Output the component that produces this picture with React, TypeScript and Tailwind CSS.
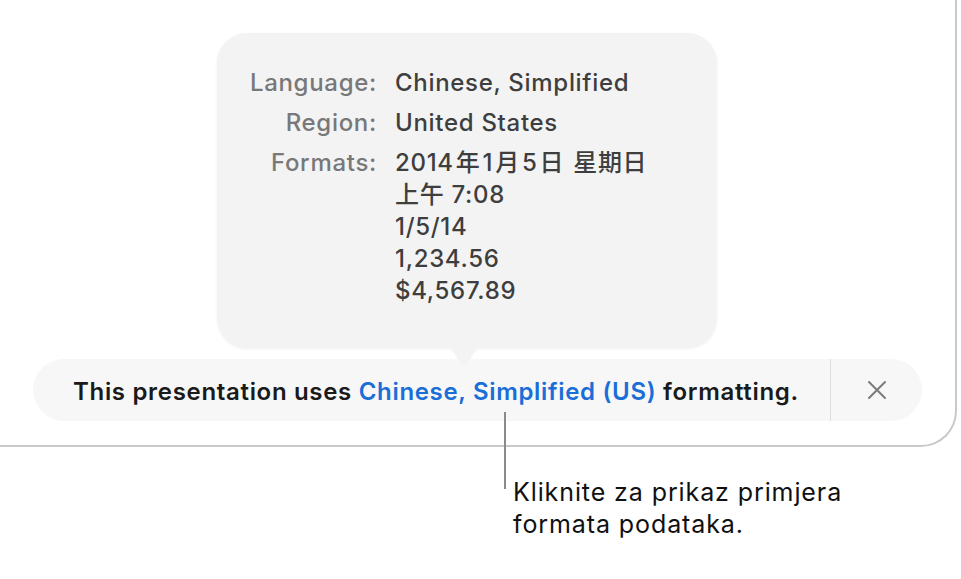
import React from "react";

export default function App() {
  const font = { fontFamily: "Inter, 'Noto Sans CJK SC', sans-serif" };
  return (
    <div className="relative w-[961px] h-[579px] bg-white overflow-hidden" style={font}>
      <div className="w-[957px] h-[447px] border-r-2 border-b-2 border-[#c9c9c9] rounded-br-[36px] flex flex-col">
        <div className="relative ml-[217px] mt-[33px] w-[500px] h-[315px] bg-[#f3f3f3] rounded-[30px] shadow-[0_1px_3px_rgba(0,0,0,0.06)] z-10">
          <div className="grid grid-cols-[160px_1fr] gap-x-[18px] pt-[30px] text-[24px] font-medium tracking-[0.7px]">
            <div className="text-right text-[#787878] leading-[40px]">Language:</div>
            <div className="text-[#3e3e3e] leading-[40px]">Chinese, Simplified</div>
            <div className="text-right text-[#787878] leading-[40px]">Region:</div>
            <div className="text-[#3e3e3e] leading-[40px]">United States</div>
            <div className="text-right text-[#787878] leading-[40px]">Formats:</div>
            <div className="text-[#3e3e3e] leading-[32px] pt-[4px]">
              <div className="whitespace-nowrap">
                2014<span className="mx-[2px]">年</span>1<span className="mx-[2px]">月</span>5<span className="mx-[2px]">日</span> 星期日
              </div>
              <div>上午 7:08</div>
              <div>1/5/14</div>
              <div>1,234.56</div>
              <div>$4,567.89</div>
            </div>
          </div>
          <svg
            className="absolute left-[222px] top-[313px]"
            width="50"
            height="23"
            viewBox="0 0 50 23"
          >
            <path d="M0 0 H50 C40 0 37 4 33 10 L28 18 C26 21 24 21 22 18 L17 10 C13 4 10 0 0 0 Z" fill="#f3f3f3" />
          </svg>
        </div>
        <div className="ml-[33px] mt-[11px] w-[889px] h-[62px] bg-[#f7f7f7] rounded-full flex items-center">
          <div className="flex-1 pl-[40px] pt-[3px] text-[24px] font-semibold text-[#1a1a1a] tracking-[0.68px] whitespace-nowrap">
            This presentation uses <span className="text-[#1a6ed8]">Chinese, Simplified (US)</span> formatting.
          </div>
          <div className="w-px h-full bg-[#dcdcdc]" />
          <div className="w-[91px] h-full flex items-center justify-center">
            <svg width="20" height="20" viewBox="0 0 20 20">
              <path d="M2 2 L18 18 M18 2 L2 18" stroke="#7b7b7b" strokeWidth="2" strokeLinecap="round" />
            </svg>
          </div>
        </div>
      </div>
      <div className="absolute left-[504px] top-[412px] w-[2px] h-[77px] bg-[#8a8a8a]" />
      <div className="absolute left-[513px] top-[476px] text-[25px] leading-[32px] text-[#111] tracking-[0.9px] whitespace-nowrap">
        <div>Kliknite za prikaz primjera</div>
        <div>formata podataka.</div>
      </div>
    </div>
  );
}
